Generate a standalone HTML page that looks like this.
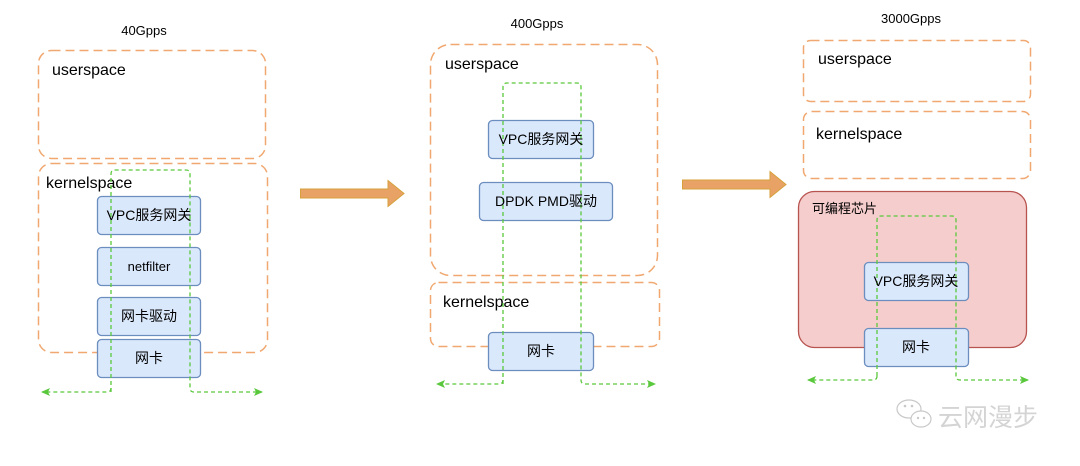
<!DOCTYPE html>
<html><head><meta charset="utf-8"><style>
html,body{margin:0;padding:0;background:#fff;}
svg{display:block}
text{font-family:"Liberation Sans","Noto Sans CJK SC",sans-serif;fill:#000}
</style></head><body>
<svg width="1080" height="466" viewBox="0 0 1080 466" xmlns="http://www.w3.org/2000/svg">
<defs>
<marker id="ah" markerWidth="10" markerHeight="10" refX="8" refY="5" orient="auto" markerUnits="userSpaceOnUse">
<path d="M0,1 L9,5 L0,9 L2,5 Z" fill="#5ac83c"/>
</marker>
</defs>
<g font-size="13" text-anchor="middle">
<text x="144" y="35">40Gpps</text>
<text x="537" y="28">400Gpps</text>
<text x="911" y="23">3000Gpps</text>
</g>
<g fill="none" stroke="#f0a870" stroke-width="1.5" stroke-dasharray="9,5">
<rect x="38.5" y="50.5" width="227" height="108" rx="13"/>
<rect x="38.5" y="163.5" width="229" height="189" rx="13"/>
<rect x="430.5" y="44.5" width="227" height="231" rx="20"/>
<rect x="430.5" y="282.5" width="229" height="64" rx="8"/>
<rect x="803.5" y="40.5" width="227" height="61" rx="7"/>
<rect x="803.5" y="111.5" width="227" height="67" rx="8"/>
</g>
<rect x="798.5" y="191.5" width="228" height="156" rx="16" fill="#f4cdcc" stroke="#b85450" stroke-width="1.3"/>
<g font-size="16">
<text x="52" y="75">userspace</text>
<text x="46" y="188">kernelspace</text>
<text x="445" y="69">userspace</text>
<text x="443" y="307">kernelspace</text>
<text x="818" y="64">userspace</text>
<text x="816" y="139">kernelspace</text>
</g>
<text x="812" y="213" font-size="13">可编程芯片</text>
<g fill="#dae8fc" stroke="#6c8ebf" stroke-width="1.3">
<rect x="97.5" y="196.5" width="103" height="38" rx="4"/>
<rect x="97.5" y="247.5" width="103" height="38" rx="4"/>
<rect x="97.5" y="297.5" width="103" height="38" rx="4"/>
<rect x="97.5" y="339.5" width="103" height="38" rx="4"/>
<rect x="488.5" y="120.5" width="105" height="38" rx="4"/>
<rect x="479.5" y="182.5" width="133" height="38" rx="4"/>
<rect x="488.5" y="332.5" width="105" height="38" rx="4"/>
<rect x="864.5" y="262.5" width="104" height="38" rx="4"/>
<rect x="864.5" y="328.5" width="104" height="38" rx="4"/>
</g>
<g fill="none" stroke="#5ac83c" stroke-width="1.3" stroke-dasharray="4,3">
<path d="M111,392 V174 Q111,170 115,170 H186 Q190,170 190,174 V388 Q190,392 194,392 H262" marker-end="url(#ah)"/>
<path d="M111,388 Q111,392 107,392 H42" marker-end="url(#ah)"/>
<path d="M503,384 V87 Q503,83 507,83 H577 Q581,83 581,87 V380 Q581,384 585,384 H655" marker-end="url(#ah)"/>
<path d="M503,380 Q503,384 499,384 H437" marker-end="url(#ah)"/>
<path d="M877,376 V220 Q877,216 881,216 H952 Q956,216 956,220 V376 Q956,380 960,380 H1028" marker-end="url(#ah)"/>
<path d="M877,376 Q877,380 873,380 H808" marker-end="url(#ah)"/>
</g>
<g font-size="14" text-anchor="middle">
<text x="149" y="220">VPC服务网关</text>
<text x="149" y="271" font-size="13">netfilter</text>
<text x="149" y="321">网卡驱动</text>
<text x="149" y="363">网卡</text>
<text x="541" y="144">VPC服务网关</text>
<text x="546" y="206">DPDK PMD驱动</text>
<text x="541" y="356">网卡</text>
<text x="916" y="286">VPC服务网关</text>
<text x="916" y="352">网卡</text>
</g>
<g fill="#e9a265" stroke="#d6a03a" stroke-width="1">
<path d="M300.5,189 H388 V180.5 L404,193.5 L388,206.5 V198 H300.5 Z"/>
<path d="M682.5,180 H770 V171.5 L786,184.5 L770,197.5 V189 H682.5 Z"/>
</g>
<g fill="#fff" stroke="#c8c8c8" stroke-width="1.2">
<ellipse cx="909" cy="409" rx="12" ry="9"/>
<ellipse cx="921" cy="419" rx="10" ry="8"/>
</g>
<g fill="#c8c8c8"><circle cx="905" cy="406" r="1.3"/><circle cx="912" cy="406" r="1.3"/><circle cx="918" cy="418" r="1.2"/><circle cx="924" cy="418" r="1.2"/></g>
<text x="938" y="426" font-size="25" style="fill:#d4d4d4">云网漫步</text>
</svg>
</body></html>
